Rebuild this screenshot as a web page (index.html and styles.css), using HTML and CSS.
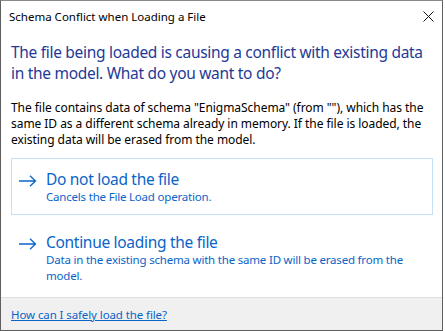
FILE: index.html
```html
<!DOCTYPE html>
<html>
<head>
<meta charset="utf-8">
<link rel="stylesheet" href="styles.css">
</head>
<body>
<div class="window">
  <div class="titlebar">
    <span class="title">Schema Conflict when Loading a File</span>
    <svg class="close" width="11" height="11" viewBox="0 0 11 11"><path d="M0.5 0.5 L10.5 10.5 M10.5 0.5 L0.5 10.5" stroke="#111" stroke-width="1" fill="none"/></svg>
  </div>
  <div class="content">
    <div class="instruction">The file being loaded is causing a conflict with existing data in the model. What do you want to do?</div>
    <div class="body">The file contains data of schema "EnigmaSchema" (from ""), which has the same ID as a different schema already in memory. If the file is loaded, the existing data will be erased from the model.</div>
    <div class="cmd cmd-focus">
      <svg class="arrow" width="18" height="12" viewBox="0 0 18 12"><path d="M0 6 H16.5 M11 0.7 L16.5 6 L11 11.3" stroke="#0a64c8" stroke-width="1.3" fill="none"/></svg>
      <div class="cmd-text">
        <div class="cmd-title">Do not load the file</div>
        <div class="cmd-sub">Cancels the File Load operation.</div>
      </div>
    </div>
    <div class="cmd cmd-second">
      <svg class="arrow" width="18" height="12" viewBox="0 0 18 12"><path d="M0 6 H16.5 M11 0.7 L16.5 6 L11 11.3" stroke="#0a64c8" stroke-width="1.3" fill="none"/></svg>
      <div class="cmd-text">
        <div class="cmd-title">Continue loading the file</div>
        <div class="cmd-sub">Data in the existing schema with the same ID will be erased from the model.</div>
      </div>
    </div>
  </div>
  <div class="footer">
    <a class="help" href="#">How can I safely load the file?</a>
  </div>
</div>
</body>
</html>
```
FILE: styles.css
```css
html, body {
  margin: 0;
  padding: 0;
  background: #ffffff;
}
.window {
  box-sizing: border-box;
  width: 443px;
  height: 331px;
  border: 1px solid #5f5f5f;
  border-top-color: #8a8a8a;
  display: flex;
  flex-direction: column;
  background: #ffffff;
  font-family: "Noto Sans", "Open Sans", sans-serif;
  color: #000;
}
.titlebar {
  height: 30px;
  display: flex;
  align-items: center;
  justify-content: space-between;
  padding: 0 8px 0 8px;
  flex: none;
}
.title {
  font-size: 11.5px;
  letter-spacing: 0;
  padding-top: 1px;
}
.close {
  display: block;
}
.content {
  flex: 1;
  padding: 11px 10px 0 10px;
}
.instruction {
  color: #1e3a96;
  font-size: 15.5px;
  line-height: 21px;
  letter-spacing: -0.3px;
}
.body {
  margin-top: 16px;
  font-size: 12px;
  line-height: 16px;
  letter-spacing: -0.05px;
}
.cmd {
  display: flex;
  align-items: flex-start;
  padding: 10px 10px 6px 7px;
  border: 1px solid transparent;
  color: #0a64c8;
}
.cmd-focus {
  margin-top: 10px;
  border-color: #c5e0f5;
  height: 39px;
  margin-right: -1px;
}
.cmd-second {
  margin-top: 6px;
}
.arrow {
  flex: none;
  margin-top: 6px;
  margin-right: 9px;
}
.cmd-title {
  font-size: 15.5px;
  line-height: 20px;
  letter-spacing: -0.3px;
}
.cmd-sub {
  font-size: 11.5px;
  line-height: 16px;
  letter-spacing: -0.2px;
}
.footer {
  flex: none;
  height: 32px;
  background: #f0f0f0;
  border-top: 1px solid #dfdfdf;
  display: flex;
  align-items: center;
  padding: 0 10px;
}
.help {
  color: #0a64c8;
  font-size: 11.5px;
  letter-spacing: -0.1px;
  text-decoration: underline;
}
```
